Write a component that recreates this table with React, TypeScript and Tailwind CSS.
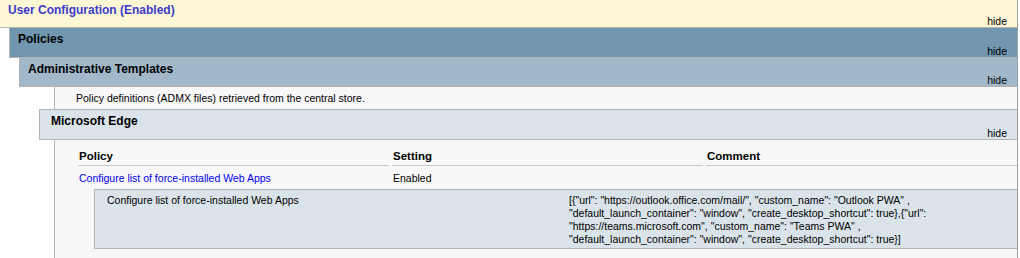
const font = { fontFamily: '"Liberation Sans", Arial, sans-serif' };

function SectionHead({
  title,
  className,
  titleClass = "text-black pt-[5px]",
}: {
  title: string;
  className: string;
  titleClass?: string;
}) {
  return (
    <div className={`flex flex-col border-b border-[#b4b4b4] ${className}`}>
      <div className={`text-[12px] font-bold leading-[12px] ${titleClass}`}>{title}</div>
      <div className="mt-auto self-end pr-[10px] text-[10.5px] leading-[11px] text-black">hide</div>
    </div>
  );
}

const json = [
  '[{"url": "https://outlook.office.com/mail/", "custom_name": "Outlook PWA" ,',
  '"default_launch_container": "window", "create_desktop_shortcut": true},{"url":',
  '"https://teams.microsoft.com", "custom_name": "Teams PWA" ,',
  '"default_launch_container": "window", "create_desktop_shortcut": true}]',
];

export default function App() {
  return (
    <div className="h-[258px] w-[1020px] overflow-hidden bg-white" style={font}>
      <div className="w-[1018px] border-r border-[#a0a0a0]">
        <SectionHead
          title="User Configuration (Enabled)"
          className="h-[28px] bg-[#fef7d6] pl-[8px]"
          titleClass="pt-[4px] text-[#3c3cc8]"
        />
        <div className="ml-[9px]">
          <SectionHead title="Policies" className="h-[30px] border-l border-l-[#b4b4b4] bg-[#7096b0] pl-[8px]" />
          <div className="ml-[10px]">
            <SectionHead
              title="Administrative Templates"
              className="h-[29px] border-l border-l-[#b4b4b4] bg-[#a1b7ca] pl-[8px]"
            />
            <div className="ml-[35px] h-[22px] border-l border-[#b4b4b4] bg-[#f8f8f8] pl-[21px] pt-[4px] text-[10.5px] leading-[14px] text-black">
              Policy definitions (ADMX files) retrieved from the central store.
            </div>
            <div className="ml-[20px]">
              <SectionHead
                title="Microsoft Edge"
                className="h-[31px] border-l border-t border-[#b4b4b4] bg-[#dae3ea] pl-[11px]"
              />
            </div>
            <div className="ml-[35px] border-l border-[#b4b4b4] bg-[#f8f8f8] pb-[12px] pt-[9px]">
              <div className="ml-[23px] flex gap-[3px] text-[11.5px] font-bold leading-[14px] text-black">
                <div className="w-[311px] border-b border-[#c8c8c8] pb-[2px] pl-[1px]">Policy</div>
                <div className="w-[311px] border-b border-[#c8c8c8] pb-[2px] pl-[1px]">Setting</div>
                <div className="w-[311px] border-b border-[#c8c8c8] pb-[2px] pl-[1px]">Comment</div>
              </div>
              <div className="ml-[23px] flex gap-[3px] pb-[4px] pt-[5px] text-[10.5px] leading-[14px]">
                <div className="w-[311px] pl-[1px] text-[#0000ee]">Configure list of force-installed Web Apps</div>
                <div className="w-[311px] pl-[1px] text-black">Enabled</div>
                <div className="w-[311px]" />
              </div>
              <div className="ml-[39px] flex h-[60px] border border-r-0 border-[#b4b4b4] bg-[#dae3ea] pt-[4px] text-[10.5px] leading-[13px] text-black">
                <div className="w-[474px] pl-[12px]">Configure list of force-installed Web Apps</div>
                <div className="whitespace-nowrap">
                  {json.map((line) => (
                    <div key={line}>{line}</div>
                  ))}
                </div>
              </div>
            </div>
          </div>
        </div>
      </div>
    </div>
  );
}
